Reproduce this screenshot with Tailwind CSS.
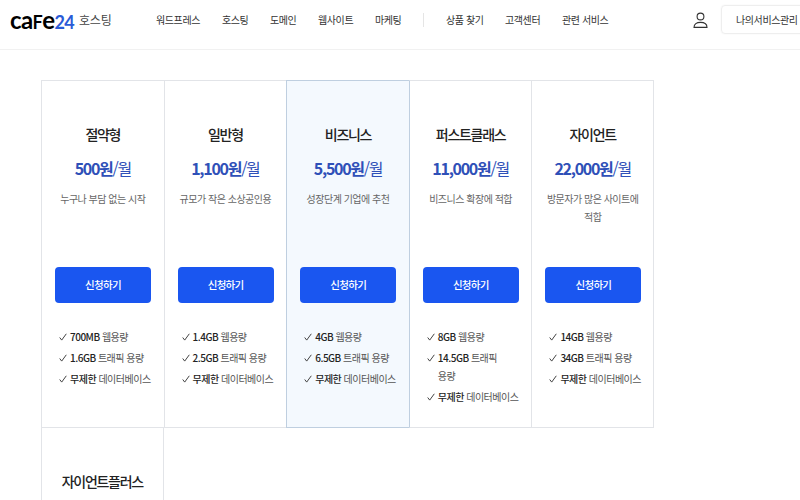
<!DOCTYPE html>
<html lang="ko">
<head>
    <meta charset="UTF-8">
    <title>Cafe24 호스팅</title>
    <script src="https://cdn.jsdelivr.net/npm/@tailwindcss/browser@4"></script>
</head>
<body class="h-[500px] w-[800px] overflow-hidden bg-white font-['Noto_Sans_CJK_KR','Noto_Sans',sans-serif] text-[#222]">

    <header class="flex h-[50px] items-center border-b border-[#f1f1f1] pb-[10px] pl-[10px]">
        <a class="flex w-[146px] shrink-0 items-center">
            <span class="w-[66px] font-['Lato',sans-serif] text-[24px] leading-none font-bold tracking-[-0.6px] whitespace-nowrap text-black">ca<span class="text-[18px]">F</span>e<span class="text-[18px] text-[#2a5bd7]">24</span></span>
            <span class="ml-[3px] text-[12px] tracking-[-0.2px] text-[#444]">호스팅</span>
        </a>
        <nav class="flex w-[537px] shrink-0 items-center text-[10px] tracking-[-0.4px] whitespace-nowrap text-[#333]">
            <a class="w-[66px]">워드프레스</a>
            <a class="w-[48px]">호스팅</a>
            <a class="w-[48px]">도메인</a>
            <a class="w-[57px]">웹사이트</a>
            <a class="w-[48px]">마케팅</a>
            <span class="mr-[22px] h-[14px] w-px bg-[#e5e5e5]"></span>
            <a class="w-[59px]">상품 찾기</a>
            <a class="w-[57px]">고객센터</a>
            <a>관련 서비스</a>
        </nav>
        <svg class="h-[16px] w-[15px] shrink-0" viewBox="0 0 15 16" fill="none" stroke="#333" stroke-width="1.1">
            <circle cx="7.5" cy="4.5" r="3.4"/>
            <path d="M1 15.4c0-3.4 2.6-5 6.5-5s6.5 1.6 6.5 5z"/>
        </svg>
        <a class="ml-[13px] flex h-[29px] w-[90px] shrink-0 items-center rounded-sm border border-[#eee] pl-[14px] text-[10px] tracking-[-0.4px] whitespace-nowrap text-[#333] shadow-[0_0_2px_rgba(0,0,0,0.06)]">나의서비스관리</a>
    </header>

    <main class="ml-[41px] mt-[30px] grid w-[613px] grid-cols-5">

        <section class="h-[348px] border-t border-b border-l border-[#e2e4e8] px-[13px] pt-[40px] text-center">
            <h2 class="text-[14px] leading-[26px] font-medium tracking-[-1.3px] text-[#222]">절약형</h2>
            <p class="mt-[8px] text-[16px] leading-[26px] font-semibold tracking-[-1.3px] text-[#2f50b8]">500원<span class="font-normal">/월</span></p>
            <div class="mt-[9px] h-[77px] text-[10px] leading-[18px] tracking-[-0.5px] text-[#666]">누구나 부담 없는 시작</div>
            <button class="h-[36px] w-[96px] rounded-sm bg-[#1a56f0] text-[10.5px] font-medium tracking-[-0.7px] text-white">신청하기</button>
            <ul class="mt-[25px] space-y-[3px] text-left text-[10px] leading-[18px] tracking-[-0.5px] text-[#555]">
                <li class="flex pl-[4px]"><svg class="mt-[5px] mr-[3px] h-[8px] w-[8px] shrink-0" viewBox="0 0 8 8" fill="none" stroke="#444" stroke-width="1"><path d="M.7 4.5l2 2.6L7.3.8"/></svg><span><b class="font-medium text-[#222]">700MB</b> 웹용량</span></li>
                <li class="flex pl-[4px]"><svg class="mt-[5px] mr-[3px] h-[8px] w-[8px] shrink-0" viewBox="0 0 8 8" fill="none" stroke="#444" stroke-width="1"><path d="M.7 4.5l2 2.6L7.3.8"/></svg><span><b class="font-medium text-[#222]">1.6GB</b> 트래픽 용량</span></li>
                <li class="flex pl-[4px] whitespace-nowrap"><svg class="mt-[5px] mr-[3px] h-[8px] w-[8px] shrink-0" viewBox="0 0 8 8" fill="none" stroke="#444" stroke-width="1"><path d="M.7 4.5l2 2.6L7.3.8"/></svg><span><b class="font-medium text-[#222]">무제한</b> 데이터베이스</span></li>
            </ul>
        </section>

        <section class="h-[348px] border-t border-b border-l border-[#e2e4e8] px-[13px] pt-[40px] text-center">
            <h2 class="text-[14px] leading-[26px] font-medium tracking-[-1.3px] text-[#222]">일반형</h2>
            <p class="mt-[8px] text-[16px] leading-[26px] font-semibold tracking-[-1.3px] text-[#2f50b8]">1,100원<span class="font-normal">/월</span></p>
            <div class="mt-[9px] h-[77px] text-[10px] leading-[18px] tracking-[-0.5px] text-[#666]">규모가 작은 소상공인용</div>
            <button class="h-[36px] w-[96px] rounded-sm bg-[#1a56f0] text-[10.5px] font-medium tracking-[-0.7px] text-white">신청하기</button>
            <ul class="mt-[25px] space-y-[3px] text-left text-[10px] leading-[18px] tracking-[-0.5px] text-[#555]">
                <li class="flex pl-[4px]"><svg class="mt-[5px] mr-[3px] h-[8px] w-[8px] shrink-0" viewBox="0 0 8 8" fill="none" stroke="#444" stroke-width="1"><path d="M.7 4.5l2 2.6L7.3.8"/></svg><span><b class="font-medium text-[#222]">1.4GB</b> 웹용량</span></li>
                <li class="flex pl-[4px]"><svg class="mt-[5px] mr-[3px] h-[8px] w-[8px] shrink-0" viewBox="0 0 8 8" fill="none" stroke="#444" stroke-width="1"><path d="M.7 4.5l2 2.6L7.3.8"/></svg><span><b class="font-medium text-[#222]">2.5GB</b> 트래픽 용량</span></li>
                <li class="flex pl-[4px] whitespace-nowrap"><svg class="mt-[5px] mr-[3px] h-[8px] w-[8px] shrink-0" viewBox="0 0 8 8" fill="none" stroke="#444" stroke-width="1"><path d="M.7 4.5l2 2.6L7.3.8"/></svg><span><b class="font-medium text-[#222]">무제한</b> 데이터베이스</span></li>
            </ul>
        </section>

        <section class="h-[348px] border-t border-b border-l border-[#bfcfe0] bg-[#f4f9fe] px-[13px] pt-[40px] text-center">
            <h2 class="text-[14px] leading-[26px] font-medium tracking-[-1.3px] text-[#222]">비즈니스</h2>
            <p class="mt-[8px] text-[16px] leading-[26px] font-semibold tracking-[-1.3px] text-[#2f50b8]">5,500원<span class="font-normal">/월</span></p>
            <div class="mt-[9px] h-[77px] text-[10px] leading-[18px] tracking-[-0.5px] text-[#666]">성장단계 기업에 추천</div>
            <button class="h-[36px] w-[96px] rounded-sm bg-[#1a56f0] text-[10.5px] font-medium tracking-[-0.7px] text-white">신청하기</button>
            <ul class="mt-[25px] space-y-[3px] text-left text-[10px] leading-[18px] tracking-[-0.5px] text-[#555]">
                <li class="flex pl-[4px]"><svg class="mt-[5px] mr-[3px] h-[8px] w-[8px] shrink-0" viewBox="0 0 8 8" fill="none" stroke="#444" stroke-width="1"><path d="M.7 4.5l2 2.6L7.3.8"/></svg><span><b class="font-medium text-[#222]">4GB</b> 웹용량</span></li>
                <li class="flex pl-[4px]"><svg class="mt-[5px] mr-[3px] h-[8px] w-[8px] shrink-0" viewBox="0 0 8 8" fill="none" stroke="#444" stroke-width="1"><path d="M.7 4.5l2 2.6L7.3.8"/></svg><span><b class="font-medium text-[#222]">6.5GB</b> 트래픽 용량</span></li>
                <li class="flex pl-[4px] whitespace-nowrap"><svg class="mt-[5px] mr-[3px] h-[8px] w-[8px] shrink-0" viewBox="0 0 8 8" fill="none" stroke="#444" stroke-width="1"><path d="M.7 4.5l2 2.6L7.3.8"/></svg><span><b class="font-medium text-[#222]">무제한</b> 데이터베이스</span></li>
            </ul>
        </section>

        <section class="h-[348px] border-t border-b border-l border-t-[#e2e4e8] border-b-[#e2e4e8] border-l-[#bfcfe0] px-[13px] pt-[40px] text-center">
            <h2 class="text-[14px] leading-[26px] font-medium tracking-[-1.3px] text-[#222]">퍼스트클래스</h2>
            <p class="mt-[8px] text-[16px] leading-[26px] font-semibold tracking-[-1.3px] text-[#2f50b8]">11,000원<span class="font-normal">/월</span></p>
            <div class="mt-[9px] h-[77px] text-[10px] leading-[18px] tracking-[-0.5px] text-[#666]">비즈니스 확장에 적합</div>
            <button class="h-[36px] w-[96px] rounded-sm bg-[#1a56f0] text-[10.5px] font-medium tracking-[-0.7px] text-white">신청하기</button>
            <ul class="mt-[25px] space-y-[3px] text-left text-[10px] leading-[18px] tracking-[-0.5px] text-[#555]">
                <li class="flex pl-[4px]"><svg class="mt-[5px] mr-[3px] h-[8px] w-[8px] shrink-0" viewBox="0 0 8 8" fill="none" stroke="#444" stroke-width="1"><path d="M.7 4.5l2 2.6L7.3.8"/></svg><span><b class="font-medium text-[#222]">8GB</b> 웹용량</span></li>
                <li class="flex pl-[4px]"><svg class="mt-[5px] mr-[3px] h-[8px] w-[8px] shrink-0" viewBox="0 0 8 8" fill="none" stroke="#444" stroke-width="1"><path d="M.7 4.5l2 2.6L7.3.8"/></svg><span class="w-[70px]"><b class="font-medium text-[#222]">14.5GB</b> 트래픽 용량</span></li>
                <li class="flex pl-[4px] whitespace-nowrap"><svg class="mt-[5px] mr-[3px] h-[8px] w-[8px] shrink-0" viewBox="0 0 8 8" fill="none" stroke="#444" stroke-width="1"><path d="M.7 4.5l2 2.6L7.3.8"/></svg><span><b class="font-medium text-[#222]">무제한</b> 데이터베이스</span></li>
            </ul>
        </section>

        <section class="h-[348px] border-t border-r border-b border-l border-[#e2e4e8] px-[13px] pt-[40px] text-center">
            <h2 class="text-[14px] leading-[26px] font-medium tracking-[-1.3px] text-[#222]">자이언트</h2>
            <p class="mt-[8px] text-[16px] leading-[26px] font-semibold tracking-[-1.3px] text-[#2f50b8]">22,000원<span class="font-normal">/월</span></p>
            <div class="mt-[9px] h-[77px] text-[10px] leading-[18px] tracking-[-0.5px] text-[#666]">방문자가 많은 사이트에 적합</div>
            <button class="h-[36px] w-[96px] rounded-sm bg-[#1a56f0] text-[10.5px] font-medium tracking-[-0.7px] text-white">신청하기</button>
            <ul class="mt-[25px] space-y-[3px] text-left text-[10px] leading-[18px] tracking-[-0.5px] text-[#555]">
                <li class="flex pl-[4px]"><svg class="mt-[5px] mr-[3px] h-[8px] w-[8px] shrink-0" viewBox="0 0 8 8" fill="none" stroke="#444" stroke-width="1"><path d="M.7 4.5l2 2.6L7.3.8"/></svg><span><b class="font-medium text-[#222]">14GB</b> 웹용량</span></li>
                <li class="flex pl-[4px]"><svg class="mt-[5px] mr-[3px] h-[8px] w-[8px] shrink-0" viewBox="0 0 8 8" fill="none" stroke="#444" stroke-width="1"><path d="M.7 4.5l2 2.6L7.3.8"/></svg><span><b class="font-medium text-[#222]">34GB</b> 트래픽 용량</span></li>
                <li class="flex pl-[4px] whitespace-nowrap"><svg class="mt-[5px] mr-[3px] h-[8px] w-[8px] shrink-0" viewBox="0 0 8 8" fill="none" stroke="#444" stroke-width="1"><path d="M.7 4.5l2 2.6L7.3.8"/></svg><span><b class="font-medium text-[#222]">무제한</b> 데이터베이스</span></li>
            </ul>
        </section>

        <section class="h-[72px] border-r border-l border-[#e2e4e8] px-[13px] pt-[40px] text-center">
            <h2 class="text-[14px] leading-[26px] font-medium tracking-[-1.3px] text-[#222]">자이언트플러스</h2>
        </section>
    </main>
</body>
</html>
